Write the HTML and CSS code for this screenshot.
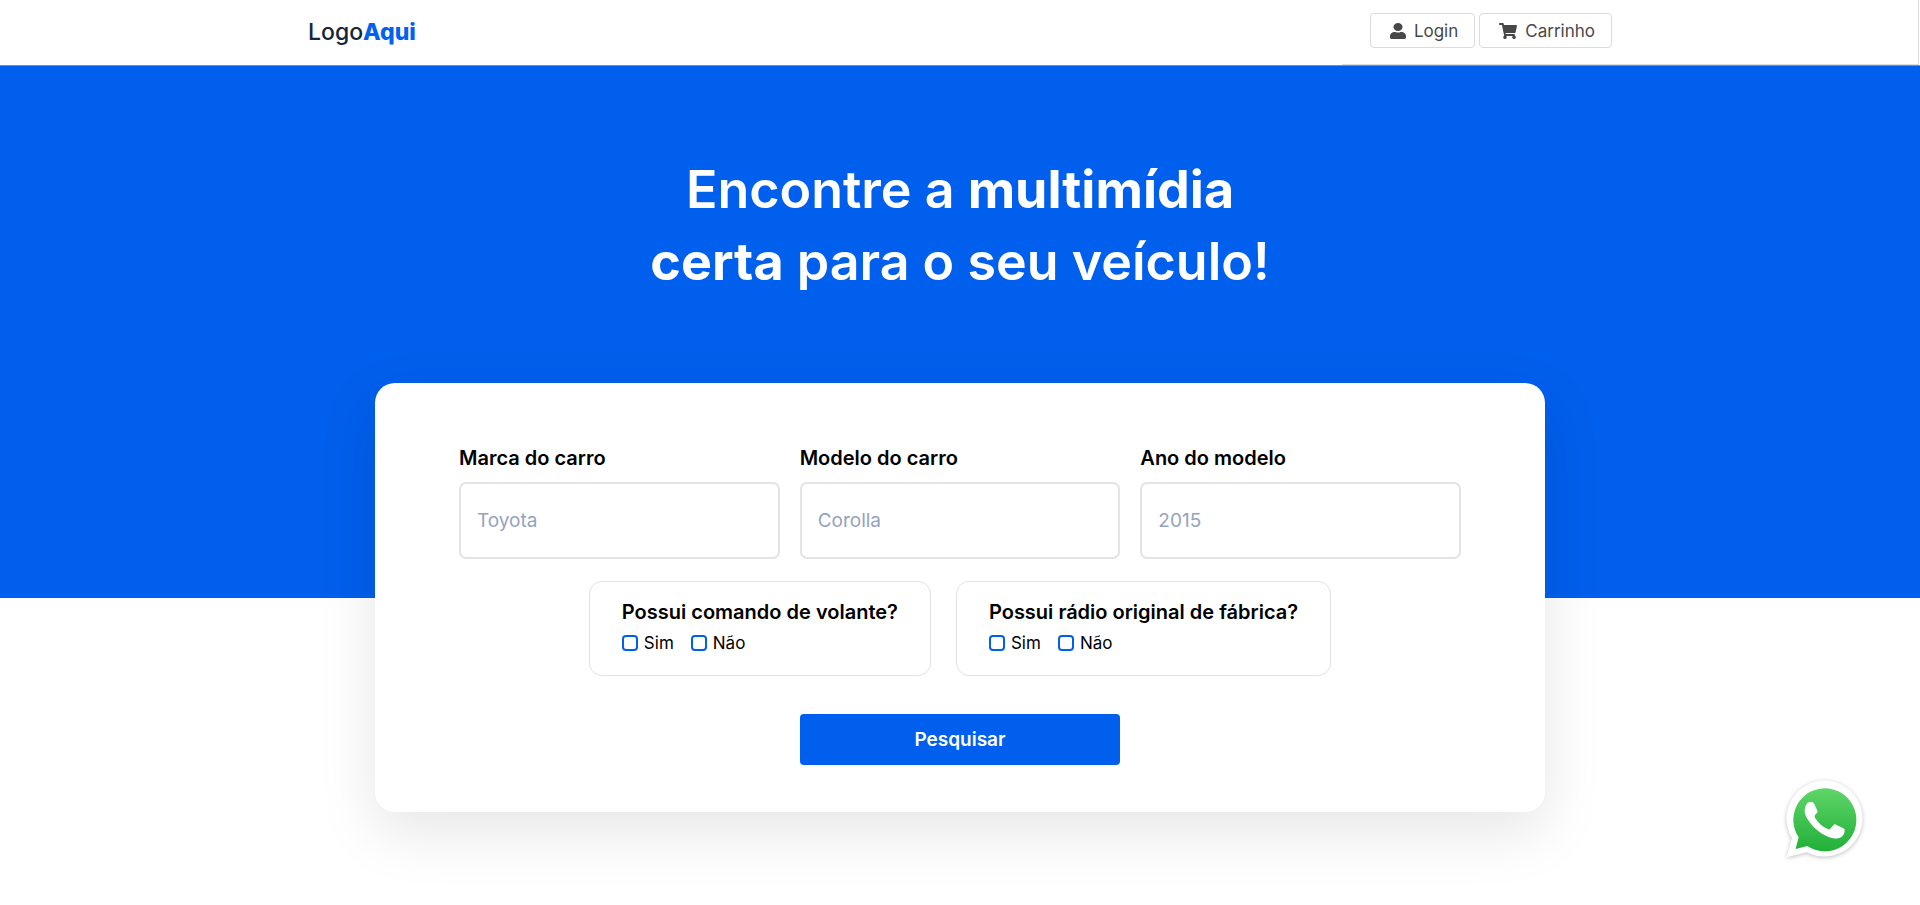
FILE: index.html
```html
<!DOCTYPE html>
<html lang="pt-BR">
<head>
  <meta charset="utf-8">
  <meta name="viewport" content="width=device-width, initial-scale=1">
  <title>LogoAqui</title>
  <link rel="stylesheet" href="styles.css">
</head>
<body>
  <header class="site-header">
    <div class="header-inner">
      <a class="logo" href="#">Logo<b>Aqui</b></a>
      <nav class="header-nav">
        <a class="nav-button" href="#">
          <svg class="icon-user" viewBox="0 0 448 512" preserveAspectRatio="none" aria-hidden="true"><path d="M224 256a128 128 0 1 0 0-256 128 128 0 1 0 0 256zM134 288C60 288 0 348 0 422v42c0 26.500 21.500 48 48 48h352c26.500 0 48-21.500 48-48v-42c0-74-60-134-134-134h-17a174 174 0 0 1-146 0z"/></svg>
          <span>Login</span>
        </a>
        <a class="nav-button" href="#">
          <svg class="icon-cart" viewBox="0 0 576 512" aria-hidden="true"><path d="M528 301l47-208c4-15-8-29-23-29H159l-9-45C148 8 138 0 126 0H24C11 0 0 11 0 24v16c0 13 11 24 24 24h70l70 343a56 56 0 1 0 67 9h210a56 56 0 1 0 64-10l5-25c4-15-8-29-23-29H218l-7-32h294c11 0 21-8 23-19z"/></svg>
          <span>Carrinho</span>
        </a>
      </nav>
    </div>
  </header>

  <main>
    <section class="hero">
      <h1 class="hero-title">Encontre a <b>multimídia<br>certa</b> para o seu veículo!</h1>
    </section>

    <form class="search-card">
      <div class="fields">
        <div class="field">
          <label for="marca">Marca do carro</label>
          <input id="marca" type="text" placeholder="Toyota">
        </div>
        <div class="field">
          <label for="modelo">Modelo do carro</label>
          <input id="modelo" type="text" placeholder="Corolla">
        </div>
        <div class="field">
          <label for="ano">Ano do modelo</label>
          <input id="ano" type="text" placeholder="2015">
        </div>
      </div>

      <div class="questions">
        <div class="question" role="group" aria-labelledby="q-volante">
          <div class="question-title" id="q-volante">Possui comando de volante?</div>
          <div class="options">
            <label class="option"><input type="checkbox" name="volante-sim"><span>Sim</span></label>
            <label class="option"><input type="checkbox" name="volante-nao"><span>Não</span></label>
          </div>
        </div>
        <div class="question" role="group" aria-labelledby="q-radio">
          <div class="question-title" id="q-radio">Possui rádio original de fábrica?</div>
          <div class="options">
            <label class="option"><input type="checkbox" name="radio-sim"><span>Sim</span></label>
            <label class="option"><input type="checkbox" name="radio-nao"><span>Não</span></label>
          </div>
        </div>
      </div>

      <button class="submit" type="submit">Pesquisar</button>
    </form>
  </main>

  <a class="whatsapp" href="#" aria-label="WhatsApp">
    <svg viewBox="0 0 240 240" aria-hidden="true">
      <defs>
        <linearGradient id="wa-green" x1="0" y1="0" x2="0" y2="1">
          <stop offset="0" stop-color="#5fd568"/>
          <stop offset="1" stop-color="#20b038"/>
        </linearGradient>
      </defs>
      <path fill="#fff" d="M5 235L21 178A114 114 0 1 1 66 220Z"/>
      <path fill="url(#wa-green)" d="M32 210L41 175A94.500 94.500 0 1 1 67 201Z"/>
      <path fill="#fff" d="M68 71c3-3 16-3 18 1 4 6 8 16 11 23 1 3 0 5-2 8-4 5-8 7-5 13 9 15 22 27 38 34 4 2 6 2 8-1l9-10c2-3 5-4 8-2l22 11c4 2 4 4 4 7-1 13-8 20-20 23-8 2-19-1-30-5-29-11-50-34-61-52-6-9-10-19-9-29 1-9 4-16 9-21z"/>
    </svg>
  </a>
</body>
</html>
```

FILE: styles.css
```css
* {
  box-sizing: border-box;
}

body {
  min-height: 100vh;
  margin: 0;
  background: #fff;
  color: #000;
  font-family: Inter, "Open Sans", sans-serif;
  font-size: 17px;
  line-height: 24px;
}

main {
  padding-bottom: 92px;
}

a {
  color: inherit;
  text-decoration: none;
}

.site-header {
  position: relative;
  padding: 0 24px;
  border-bottom: 1px solid #6d8fc4;
}

.site-header::after {
  content: "";
  position: absolute;
  right: 1px;
  bottom: 0;
  width: 30%;
  height: 100%;
  border: solid #dcdcdc;
  border-width: 0 1px 1px 0;
  pointer-events: none;
}

.header-inner {
  display: flex;
  align-items: flex-start;
  justify-content: space-between;
  max-width: 1304px;
  margin: 0 auto;
  padding: 13px 0 17px;
}

.logo {
  padding-top: 4px;
  color: #14263d;
  font-size: 23px;
  font-weight: 500;
  line-height: 30px;
}

.logo b {
  color: #0061f2;
  font-weight: 800;
}

.header-nav {
  display: flex;
  gap: 4px;
}

.nav-button {
  display: flex;
  align-items: center;
  gap: 8px;
  height: 35px;
  padding: 0 16px 0 19px;
  border: 1px solid #dbdbdb;
  border-radius: 4px;
  color: #484848;
}

.nav-button svg {
  height: 16px;
  fill: currentColor;
}

.icon-user {
  width: 16px;
}

.icon-cart {
  width: 18px;
}

.hero {
  padding: 88px 24px 300px;
  background: #005fec;
  color: #fff;
  text-align: center;
}

.hero-title {
  margin: 0;
  font-size: 52px;
  font-weight: 600;
  line-height: 72px;
}

.hero-title b {
  font-weight: 700;
}

.search-card {
  display: flex;
  flex-direction: column;
  align-items: center;
  max-width: 1170px;
  margin: -215px auto 0;
  padding: 61px 84px 47px;
  border-radius: 20px;
  background: #fff;
  box-shadow: 0 20px 60px rgba(0, 0, 0, 0.1);
}

.fields {
  display: grid;
  grid-template-columns: repeat(3, 1fr);
  gap: 20px;
  width: 100%;
}

.field label {
  display: block;
  margin-bottom: 10px;
  font-size: 20px;
  font-weight: 600;
  line-height: 28px;
}

.field input {
  width: 100%;
  height: 77px;
  padding: 0 16px;
  border: 2px solid #e4e4e4;
  border-radius: 7px;
  background: #fff;
  font: inherit;
  font-size: 19px;
}

.field input::placeholder {
  color: #94a3bd;
  opacity: 1;
}

.questions {
  display: flex;
  justify-content: center;
  gap: 25px;
  margin-top: 22px;
}

.question {
  padding: 16px 32px 20px;
  border: 1px solid #e2e2e2;
  border-radius: 13px;
}

.question-title {
  font-size: 20px;
  font-weight: 600;
  line-height: 28px;
}

.options {
  display: flex;
  gap: 17px;
  margin-top: 5px;
}

.option {
  display: flex;
  align-items: center;
  gap: 6px;
}

.option input {
  appearance: none;
  width: 16px;
  height: 16px;
  margin: 0;
  border: 2px solid #005fec;
  border-radius: 4px;
  background: #fff;
}

.option input:checked {
  background: #005fec;
}

.submit {
  width: 320px;
  max-width: 100%;
  height: 51px;
  margin-top: 38px;
  border: 0;
  border-radius: 4px;
  background: #005fec;
  color: #fff;
  font: inherit;
  font-size: 19px;
  font-weight: 600;
}

.whatsapp {
  position: fixed;
  right: 55px;
  bottom: 46px;
  width: 80px;
  height: 80px;
}

.whatsapp svg {
  display: block;
  width: 100%;
  height: 100%;
  filter: drop-shadow(0 1px 2px rgba(0, 0, 0, 0.25));
}
```
